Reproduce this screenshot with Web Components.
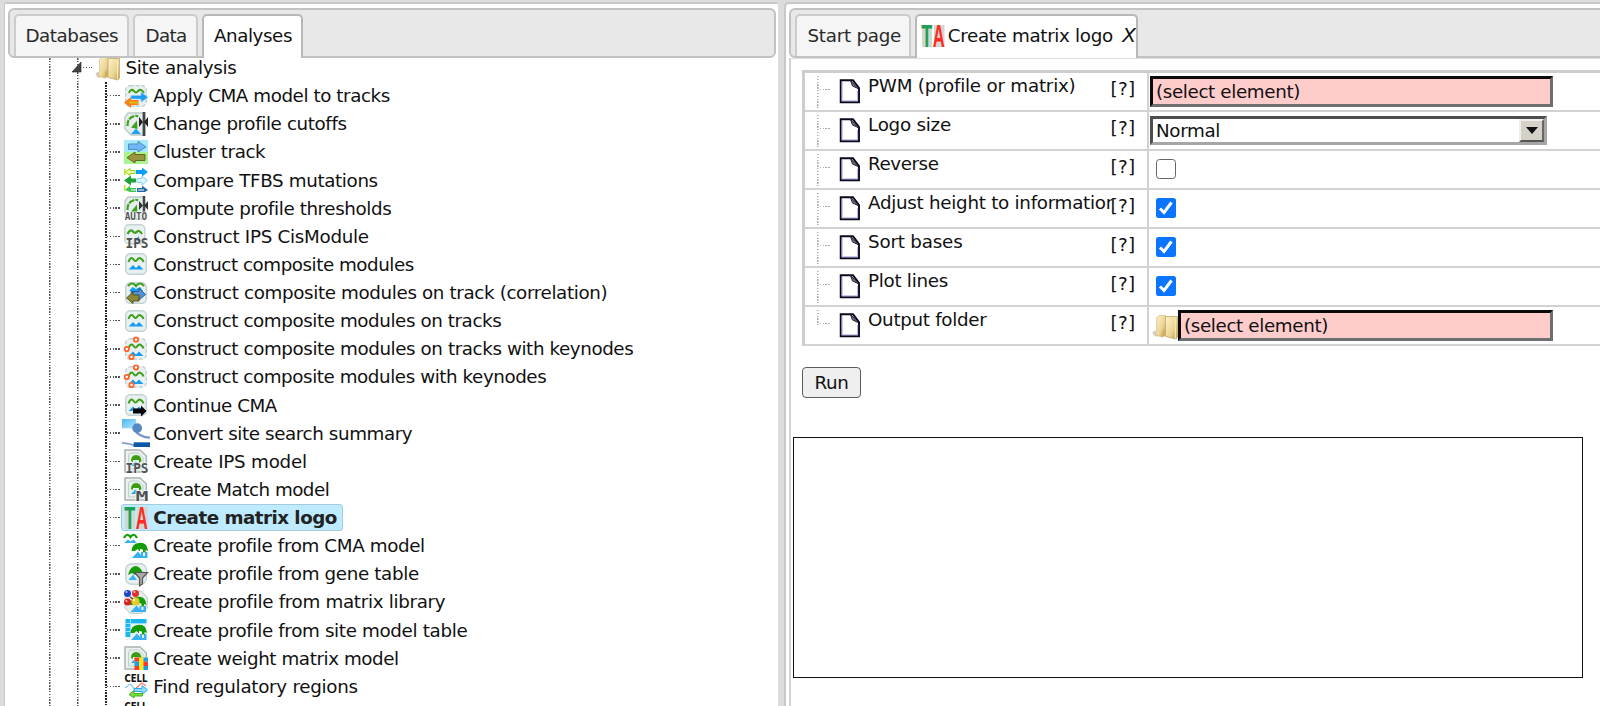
<!DOCTYPE html>
<html lang="en">
<head>
<meta charset="utf-8">
<title>Create matrix logo</title>
<style>
html,body{margin:0;height:100%;overflow:hidden;background:#dcdcdc}
body{font:18.3px/28px "DejaVu Sans",Verdana,sans-serif;color:#111}
</style>
</head>
<body>
<app-shell>
  <tab-panel slot="left">
    <tab-item slot="tabs" style="--w:115.5px;--p:10px"><fit-text w="92.5">Databases</fit-text></tab-item>
    <tab-item slot="tabs" style="--w:65px;--p:11px;--m:3.5px"><fit-text w="41">Data</fit-text></tab-item>
    <tab-item slot="tabs" active style="--w:101px;--p:10px;--m:4.5px"><fit-text w="78">Analyses</fit-text></tab-item>
    <analysis-tree></analysis-tree>
  </tab-panel>
  <tab-panel slot="right" wide>
    <tab-item slot="tabs" style="--w:115.5px;--p:10.5px"><fit-text w="93.5">Start page</fit-text></tab-item>
    <tab-item slot="tabs" active style="--w:223px;--p:4px;--m:4.5px"><mini-icon name="ta"></mini-icon><fit-text w="165" style="margin-left:2.8px">Create matrix logo</fit-text><fit-text w="14.5" style="margin:-3px 0 0 9.5px;font-style:italic;font-size:20px">X</fit-text></tab-item>
    <analysis-form></analysis-form>
  </tab-panel>
</app-shell>
<script>
class FitText extends HTMLElement{
  connectedCallback(){
    if(this.shadowRoot)return;
    this.attachShadow({mode:'open'}).innerHTML='<style>:host{display:inline-block;white-space:nowrap;flex:none}span{display:inline-block}</style><span><slot></slot></span>';
    const s=this.shadowRoot.querySelector('span'),w=+this.getAttribute('w'),n=this.textContent.length;
    if(w&&n){const d=w-s.getBoundingClientRect().width;s.style.letterSpacing=(d/n)+'px';}
  }
}

const badge='<rect x="1.7" y="1.7" width="20.6" height="20.6" rx="4.5" fill="#e9f0f0" stroke="#c3d3d3" stroke-width="1.4"/>';
const waves=(y=0,w=0)=>`<path transform="translate(0 ${y})" d="M4.5 10.5Q6.5 5 9 7.2Q11.5 11 13 8.5Q15 5.5 17 7.2Q19 8.5 19.5 10.5" fill="none" stroke="#3fa01c" stroke-width="2"/><path transform="translate(0 ${y})" d="M4.5 18L9 13.5L12 16.5L15 13.5L19.5 18Z" fill="#159df2"/>`;
const leaf='<path d="M7 12Q7 6.5 12 6Q17 6 17.5 12L15 14V11H9V13Z" fill="#3b9c12"/><path d="M7 17L11.5 12.5L17 17Z" fill="#29a2f0"/>';
const sheet='<path d="M1 1H16L22.3 7V23H1Z" fill="#edf2f1" stroke="#a9b4b3" stroke-width="1.5"/><path d="M4.5 5.5Q5 4 7 4H14.500L19 8.500V18Q19 20 17 20H4.500Z" fill="#e4f1eb" stroke="#bdd0ca"/>';
const bush='<path d="M7.500 17Q8 9.500 14.500 9Q23 7.500 24 17L21.500 16V18.500H19V15.500L16 15V17.500L13.500 15L11 17Z" fill="#149b08"/><path d="M8 24L14 17.500L17 21V18H19V22H21V18H23.500V24Z" fill="#38b0f5"/>';
const keynodes=badge.replace('stroke-width','stroke-dasharray="4 2" stroke-width')+waves(1)+'<g fill="#fff" stroke="#ff6428" stroke-width="1.800"><circle cx="12" cy="2.500" r="2.200"/><circle cx="2.800" cy="12" r="2.200"/><circle cx="7.500" cy="20" r="2.200"/></g>';
const gauge='<path d="M4 1H20V23H7L1 17V5Z" fill="#e6eded" stroke="#bccaca" stroke-width="1.400"/><path d="M3.500 14Q3 7 9 4.500Q12 3 14 4.500" fill="none" stroke="#3fa01c" stroke-width="2.200" stroke-dasharray="6 1"/><path d="M7 15.500L13 8.500L13.500 17Z" fill="#3fa01c"/>';
const fader='<path d="M20 0V24" stroke="#444" stroke-width="2.800"/><path d="M15 5L19 10L15 15ZM24 5L20 10L24 15Z" fill="#222"/>';
const t=(s,x,y,w,z,c='#444',f='DejaVu Sans',k='')=>`<text x="${x}" y="${y}" textLength="${w}" lengthAdjust="spacingAndGlyphs" font-family="${f}" font-size="${z}" font-weight="700" fill="${c}" ${k}>${s}</text>`;
const arrR=(x,y,c,s='none')=>`<path transform="translate(${x} ${y})" d="M0 3H9V0L15 5L9 10V7H0Z" fill="${c}" stroke="${s}"/>`;
const arrL=(x,y,c,s='none')=>`<path transform="translate(${x} ${y})" d="M15 3H6V0L0 5L6 10V7H15Z" fill="${c}" stroke="${s}"/>`;
const halo='stroke="#fff" stroke-width="1" paint-order="stroke"';
const cell=t('CELL',.5,8,23,11,'#111','DejaVu Sans')+'<path d="M1 14L6 10L11 15" fill="none" stroke="#8dc9f2" stroke-width="1.300"/><path d="M12 14L18 9L22 12" fill="none" stroke="#ff7468" stroke-width="1.200"/><path d="M10 14.500H18V11.500L23.500 16L18 20.500V17.500H10Z" fill="#8ddbff" stroke="#28a9ec"/><path d="M18.500 19.500H10V16.500L5 20.500L10 24V22H18.500Z" fill="#79dc45" stroke="#48b525"/>';
const ICONS={
 apply:badge.replace('stroke-width','stroke-dasharray="4 1.5" stroke-width')+'<path d="M5 9Q7 4 10 7Q12 10 14 7Q17 4 20 9" fill="none" stroke="#3fa01c" stroke-width="2"/><path d="M7 11.500H17V8L24 13.500L17 18V15H7Z" fill="#1d9af2" stroke="#8dcfff" stroke-width=".7"/><path d="M14.500 16H7V13L0 18.500L7 24V21H14.500Z" fill="#ff7a16"/><path d="M5 18.500H14" stroke="#d7bd18" stroke-width="1.800"/>',
 cutoffs:gauge+'<path d="M7 22L12 16.500L17 22Z" fill="#22a2f2"/>'+fader,
 cluster:'<path d="M0 0H24V12H0Z" fill="#a6e9fb"/><path d="M0 12H24V24H0Z" fill="#a9f391"/><path d="M4.500 4H14V1.200L22 7L14 12V9.500H4.500Z" fill="#70b7f5" stroke="#4e8fc2"/><path d="M21 14.500H11V12L3 17.700L11 23V20.500H21Z" fill="#99963d" stroke="#686521"/>',
 compare:'<path d="M11 2.500H6V.5L1 4L6 7.500V5.500H11Z" fill="#e8f6a6" stroke="#9cd51e"/><path d="M12 2H18V-.5L24 4L18 8.500V6H12Z" fill="#099ff4"/><path d="M12 10.500H7V7.500L0 12.500L7 17.500V14.500H12Z" fill="#1ba13a"/><path d="M13 10.500H18V8L23.500 12.500L18 17V14.500H13Z" fill="#d9f6ff" stroke="#8ccee5"/><path d="M1 22L6 17.500V20H12V24H6Z" fill="#39c64b"/><path d="M7 22H12" stroke="#fff"/><path d="M13 20H18V17.500L24 22L21 24H13Z" fill="#2469a4"/><path d="M14 22H20" stroke="#fff"/><path d="M.7 1V7M.7 17V23" stroke="#b9e820" stroke-width="1.500"/>',
 auto:gauge+'<path d="M20 0V16" stroke="#444" stroke-width="2.500"/><path d="M15 5L19 9.500L15 14ZM24 5L20 9.500L24 14Z" fill="#333"/>'+t('AUTO',.7,24,22.500,10,'#555','DejaVu Sans Mono',halo),
 ips:'<rect x=".8" y=".8" width="20" height="19" rx="4" fill="#e9f0f0" stroke="#c3d3d3" stroke-width="1.400"/><path d="M3.500 10Q6 5 8.500 7Q11 10 12.500 8Q15 5 18 10" fill="none" stroke="#3fa01c" stroke-width="2.200"/><path d="M11 16L15 12V17Z" fill="#22a2f2"/>'+t('IPS',1.500,24,23,14,'#505050','DejaVu Sans Mono'),
 comp:badge+waves(-.5),
 corr:badge+'<path d="M4 5Q8 0 12 5Q16 0 20 5" fill="none" stroke="#3fa01c" stroke-width="2.200"/><path d="M5 10L8.500 6L12 8L16 6L19 10Z" fill="#159df2"/><path d="M7 10.500H15V7L21.500 13.500L15 19V16H8Z" fill="#4e93dc" stroke="#2e5b94"/><path d="M15 14H9V11L2.500 17L9 22.500V20H15Z" fill="#8b8839" stroke="#55521e"/>',
 key:keynodes,
 cont:badge+waves(0)+'<path d="M9 15.500H17V12.500L22.500 18L17 23.500V20.500H9Z" fill="#000"/>',
 convert:'<defs><linearGradient id="a" y2="1"><stop stop-color="#4cb7f3"/><stop offset="1" stop-color="#b5e6fc"/></linearGradient></defs><path d="M0 0H12V8H0Z" fill="url(#a)"/><path d="M10 8.500Q15 16 24 16" fill="none" stroke="#7796c8" stroke-width="2"/><circle cx="13" cy="7.800" r="4.200" fill="#5789c6"/><path d="M0 20.500Q7 21 11 23" fill="none" stroke="#839fc9" stroke-width="1.600"/><path d="M10 20H24V24H10Z" fill="#0b58a9"/>',
 mips:sheet+leaf+t('IPS',1.500,24,23,14,'#505050','DejaVu Sans Mono',halo),
 match:sheet+leaf+t('M',11.500,24,13,13.500,'#505050','DejaVu Sans Mono',halo),
 ta:'<path d="M1 1H11V23H1ZM13 1H23.500V23H13Z" fill="#d0d9cf"/>'+t('T',.3,23,11,31,'#20a057','Liberation Sans')+t('A',11.700,23,12,31,'#ff2b26','Liberation Sans'),
 pcma:'<path d="M0 4Q3 -2 6.500 3Q10 -2 13 4" fill="none" stroke="#149b08" stroke-width="2.200"/><path d="M0 9L4 5.500L6.500 7.500L9.500 5.500L13 9Z" fill="#38b0f5"/>'+bush,
 gene:badge.replace('rx="4.5"','rx="6"')+'<path d="M4 13Q6 4.500 11.500 4Q16 4.500 18.500 10V12L14 10.500L11 13L8 11Z" fill="#149b08"/><path d="M4.500 18L9 12.500L13 18Z" fill="#38b0f5"/><path d="M10.500 10.500H23.500L18.500 16V22L15.500 24V16Z" fill="#aaa" stroke="#555" stroke-width="1.200"/>',
 lib:'<path d="M5 1H17L23.300 7V18L18 23.300H6L1 18V5Z" fill="#e4eeeb" stroke="#b7cbc5"/>'+`<g transform="translate(-1.500 -2)">${bush}</g>`+'<circle cx="3.500" cy="3.500" r="3.500" fill="#1c42cf"/><circle cx="11.500" cy="3.500" r="3.500" fill="#df3030"/><circle cx="3.500" cy="12" r="3.500" fill="#dd2020"/><circle cx="11.500" cy="11.500" r="4" fill="#e4cb2a"/><g fill="#fff" opacity=".75"><circle cx="2.500" cy="2" r="1"/><circle cx="10.500" cy="2" r="1"/><circle cx="2.500" cy="11" r="1"/><circle cx="10" cy="10" r="1.200"/></g><path d="M6 7L9 9" stroke="#733" stroke-width="1.500"/>',
 site:'<path d="M1.500 1H22.500V22H1.500Z" fill="#e6f2f3"/><path d="M1.500 1H22.500V5H6V19H1.500Z" fill="#19b6f1"/><path d="M6.500 1V19M1.500 5.500H22.500M1.500 9.500H6M1.500 13.500H6" stroke="#9adff8"/>'+`<g transform="translate(-1 -2)">${bush}</g>`,
 weight:sheet+leaf+'<path d="M10.500 11.500H24V24H10.500Z" fill="#ffe51c"/><path d="M10.500 11.500H15V15.500H10.500ZM19.500 15.500H24V20H19.500ZM10.500 20H15V24H10.500Z" fill="#f33b35"/><path d="M19.500 11.500H24V15.500H19.500ZM10.500 15.500H15V20H10.500ZM19.500 20H24V24H19.500Z" fill="#1e9bea"/>',
 cell,
 folder:'<defs><linearGradient id="f" x2="1" y2="1"><stop stop-color="#fff3c9"/><stop offset=".6" stop-color="#ead594"/><stop offset="1" stop-color="#c49b4b"/></linearGradient></defs><path d="M-1.500 18Q0 15 3 16V22Q-1 21 -1.500 18Z" fill="#d4d0c8"/><path d="M2.500 3.500L5 1.500H11V20L8 22L1.500 20.500V17L2.500 16Z" fill="url(#f)" stroke="#ccb87e" stroke-width=".6"/><path d="M8 16L10.500 15V21L8 22Z" fill="#cfae64"/><path d="M11 2.500H22.500V22L21 24L11 21.500Z" fill="url(#f)" stroke="#c2a768" stroke-width=".8"/><path d="M20.500 4V23.500" stroke="#fbeab5" stroke-width="1"/>',
 doc:'<path d="M1.700 1.300H14L20 9V23.300H1.700Z" fill="#fff" stroke="#08081c" stroke-width="1.900"/><path d="M3.200 2.700V21.800H18.500V12" fill="none" stroke="#b8b8ee" stroke-width="1.100"/><path d="M11.500 1.500L13.500 7L19 9.500Z" fill="#777a91" stroke="#222238" stroke-width="1"/>'
};
class MiniIcon extends HTMLElement{
  connectedCallback(){
    if(this.shadowRoot)return;
    const s=this.getAttribute('size')||24;
    this.attachShadow({mode:'open'}).innerHTML=`<style>:host{display:block;flex:none;width:${s}px;height:${s}px}svg{display:block;overflow:visible}</style><svg width="${s}" height="${s}" viewBox="0 0 24 24">${ICONS[this.getAttribute('name')]}</svg>`;
  }
}
class AppShell extends HTMLElement{
  constructor(){super();this.attachShadow({mode:'open'}).innerHTML=`<style>
  :host{display:grid;grid-template-columns:774px 816px;gap:6px;height:100vh;box-sizing:border-box;padding:2px 0 0 4px;overflow:hidden}
  .p{min-width:0;overflow:hidden;background:#fff;border:2px solid #c8c8c8;border-right:0;border-bottom:0;border-radius:5px 0 0 0}
  .l{border-left-width:1px;border-radius:3px 2px 0 0}
  </style><div class="p l"><slot name="left"></slot></div><div class="p"><slot name="right"></slot></div>`;}
}
class TabPanel extends HTMLElement{
  constructor(){super();this.attachShadow({mode:'open'}).innerHTML=`<style>
  :host{display:flex;flex-direction:column;height:100%;box-sizing:border-box;padding:4px 2px 0 3px}
  :host([wide]){padding-right:0}
  .bar{display:flex;align-items:flex-end;box-sizing:border-box;height:50px;flex:none;background:#e8e8e8;border:2px solid #c2c2c2;border-radius:6px;padding-left:3.500px}
  :host([wide]) .bar{border-right:0;border-radius:6px 0 0 6px;padding-left:4px}
  .body{flex:1;min-height:0;overflow:hidden}
  :host([wide]) .body{border-left:2px solid #d4d4d4;border-top:1px solid #ddd}
  </style><div class="bar"><slot name="tabs"></slot></div><div class="body"><slot></slot></div>`;}
}
class TabItem extends HTMLElement{
  constructor(){super();this.attachShadow({mode:'open'}).innerHTML=`<style>
  :host{display:flex;align-items:center;box-sizing:border-box;width:var(--w);height:42px;margin-left:var(--m,0);padding-left:var(--p);border:2px solid #ccc;border-bottom:0;border-radius:5px 5px 0 0;background:#f5f5f5;color:#2a2a2a;overflow:hidden}
  :host([active]){background:#fff;border-color:#b8b8b8;color:#111;height:44px;margin-bottom:-2px;padding-bottom:2px;position:relative}
  </style><slot></slot>`;}
}
const ROWS=[['apply','Apply CMA model to tracks',389.5],['cutoffs','Change profile cutoffs',346],['cluster','Cluster track',265],['compare','Compare TFBS mutations',377.5],['auto','Compute profile thresholds',391],['ips','Construct IPS CisModule',368.5],['comp','Construct composite modules',413.5],['corr','Construct composite modules on track (correlation)',607],['comp','Construct composite modules on tracks',501],['key','Construct composite modules on tracks with keynodes',633],['key','Construct composite modules with keynodes',546],['cont','Continue CMA',276.5],['convert','Convert site search summary',412],['mips','Create IPS model',306.5],['match','Create Match model',329],['ta','Create matrix logo',336.5],['pcma','Create profile from CMA model',424.5],['gene','Create profile from gene table',418.5],['lib','Create profile from matrix library',445],['site','Create profile from site model table',467],['weight','Create weight matrix model',398.5],['cell','Find regulatory regions',357.5],['cell','',0]];
class AnalysisTree extends HTMLElement{
  constructor(){super();this.attachShadow({mode:'open'}).innerHTML=`<style>
  :host{display:flow-root;height:100%;--dot:repeating-linear-gradient(180deg,#555 0 1.500px,#fff 1.500px 2.813px);background:var(--dot) 41px 0/1.500px 100% no-repeat,var(--dot) 69px 0/1.500px 100% no-repeat}
  .root{display:flex;align-items:center;height:28.130px;margin-top:-4.500px;padding-left:63.500px}
  .root svg{flex:none}
  .dots{width:13px;height:1.400px;flex:none;background:repeating-linear-gradient(90deg,#555 0 1.500px,#fff 1.500px 2.813px)}
  .kids{margin-left:97px;background:repeating-linear-gradient(180deg,#222 0 1.700px,#fff 1.700px 2.813px) 0 0/2px 100% no-repeat}
  .row{display:flex;align-items:center;height:28.130px;padding-left:1.500px}
  .a{display:flex;align-items:center;box-sizing:border-box;height:27.500px;margin-left:1px;padding:0 5px 0 2.500px;border:1px solid transparent;border-radius:3px}
  .a.sel{background:#beebff;border-color:#a5cbdc;font-weight:700;color:#222}
  .a fit-text{margin-left:5.300px;margin-top:1px}
  .big{margin:0 -2px}
  .root fit-text{margin:1px 0 0 5px}
  </style><div class="root"><svg width="10" height="11" viewBox="0 0 10 11"><path d="M9 0V10H0Z" fill="#444" stroke="#222" stroke-width=".6"/></svg><div class="dots" style="width:9px;margin-left:1px"></div><mini-icon name="folder" style="margin-left:5px"></mini-icon><fit-text w="111">Site analysis</fit-text></div><div class="kids">${ROWS.map(([i,s,e])=>`<div class="row"><div class="dots"></div><div class="a${i=='ta'?' sel':''}"><mini-icon name="${i}"${i=='convert'?' size="28" class="big"':''}></mini-icon>${s?`<fit-text w="${e-153}">${s}</fit-text>`:''}</div></div>`).join('')}</div>`;}
}
const arrow='<svg width="12" height="7" viewBox="0 0 12 7"><path d="M0 0H12L6 7Z" fill="#111"/></svg>';
const check='<svg width="20" height="20" viewBox="0 0 20 20"><rect width="20" height="20" rx="2.500" fill="#0b75ff"/><path d="M4 10.500L8 14.500L15.500 4.500" fill="none" stroke="#fff" stroke-width="3"/></svg>';
const FORM=[['PWM (profile or matrix)',207.5,'<div class="in" style="width:403px"><fit-text w="144">(select element)</fit-text></div>'],['Logo size',83,`<div class="sel"><fit-text w="64">Normal</fit-text><b>${arrow}</b></div>`],['Reverse',70.5,'<i></i>'],['Adjust height to information',249,`<u>${check}</u>`],['Sort bases',94.500,`<u>${check}</u>`],['Plot lines',80,`<u>${check}</u>`],['Output folder',118.500,'<mini-icon name="folder" size="25" style="margin:4px 0 0 3.500px"></mini-icon><div class="in" style="width:375px;margin-left:-.5px"><fit-text w="144">(select element)</fit-text></div>']];
class AnalysisForm extends HTMLElement{
  constructor(){super();this.attachShadow({mode:'open'}).innerHTML=`<style>
  :host{display:block;padding-top:11px}
  .t{margin-left:11px;border-left:3px solid #cdcdcd;border-top:3px solid #cdcdcd}
  .r{display:grid;grid-template-columns:343.500px 1fr;height:39.070px;box-sizing:border-box;border-bottom:2px solid #d2d2d2}
  .n{display:flex;align-items:flex-start;border-right:2px solid #d2d2d2;padding-left:12px;overflow:hidden}
  .v{display:flex;align-items:flex-start;padding:3px 0 0 1.500px}
  .g{width:14px;height:34px;margin-top:3px;flex:none;background:repeating-linear-gradient(180deg,#aaa 0 1.400px,#fff 1.400px 2.813px) 0 0/1.500px 100% no-repeat,repeating-linear-gradient(90deg,#aaa 0 1.400px,#fff 1.400px 2.813px) 0 13px/100% 1.400px no-repeat}
  .r:last-child .g{height:14.400px}
  .lab{width:243.500px;margin:-1px 0 0 5.500px;overflow:hidden;flex:none}
  .q{margin:2px 0 0 -1px}
  .in,.sel{box-sizing:border-box;display:flex;align-items:center;border:3px solid;color:#111}
  .in{height:31px;background:#fcc;border-color:#0a0a0a #6d6f70 #6d6f70 #0a0a0a;padding-left:3px}
  .sel{width:397px;height:29px;margin-top:1px;border-color:#4e4e4e #a6a6a6 #a6a6a6 #4e4e4e;padding-left:3px;justify-content:space-between;background:#fff}
  b{display:flex;align-items:center;justify-content:center;box-sizing:border-box;width:25px;height:23px;background:#d5d1c9;border:2px solid;border-color:#eee #666 #555 #eee}
  i,u{display:block;box-sizing:border-box;width:20px;height:20px;margin:5px 0 0 6px}
  i{border:1.400px solid #666;border-radius:3.500px}
  svg{display:block}
  button{display:block;box-sizing:border-box;width:59px;height:31px;margin:21px 0 0 11px;padding:0;font:inherit;line-height:28px;border:1.400px solid #5c5c5c;border-radius:4px;background:#efefef;color:#111}
  .out{box-sizing:border-box;width:790px;height:241px;margin:39px 0 0 2px;border:1.300px solid #111}
  </style><div class="t">${FORM.map(([l,w,v])=>`<div class="r"><div class="n"><div class="g"></div><mini-icon name="doc" style="margin:6px 0 0 7.500px"></mini-icon><div class="lab"><fit-text w="${w}">${l}</fit-text></div><fit-text class="q" w="25">[?]</fit-text></div><div class="v">${v}</div></div>`).join('')}</div><button><fit-text w="34">Run</fit-text></button><div class="out"></div>`;}
}
for(const [n,c] of [['fit-text',FitText],['mini-icon',MiniIcon],['app-shell',AppShell],['tab-panel',TabPanel],['tab-item',TabItem],['analysis-tree',AnalysisTree],['analysis-form',AnalysisForm]])customElements.define(n,c);
</script>
</body>
</html>
